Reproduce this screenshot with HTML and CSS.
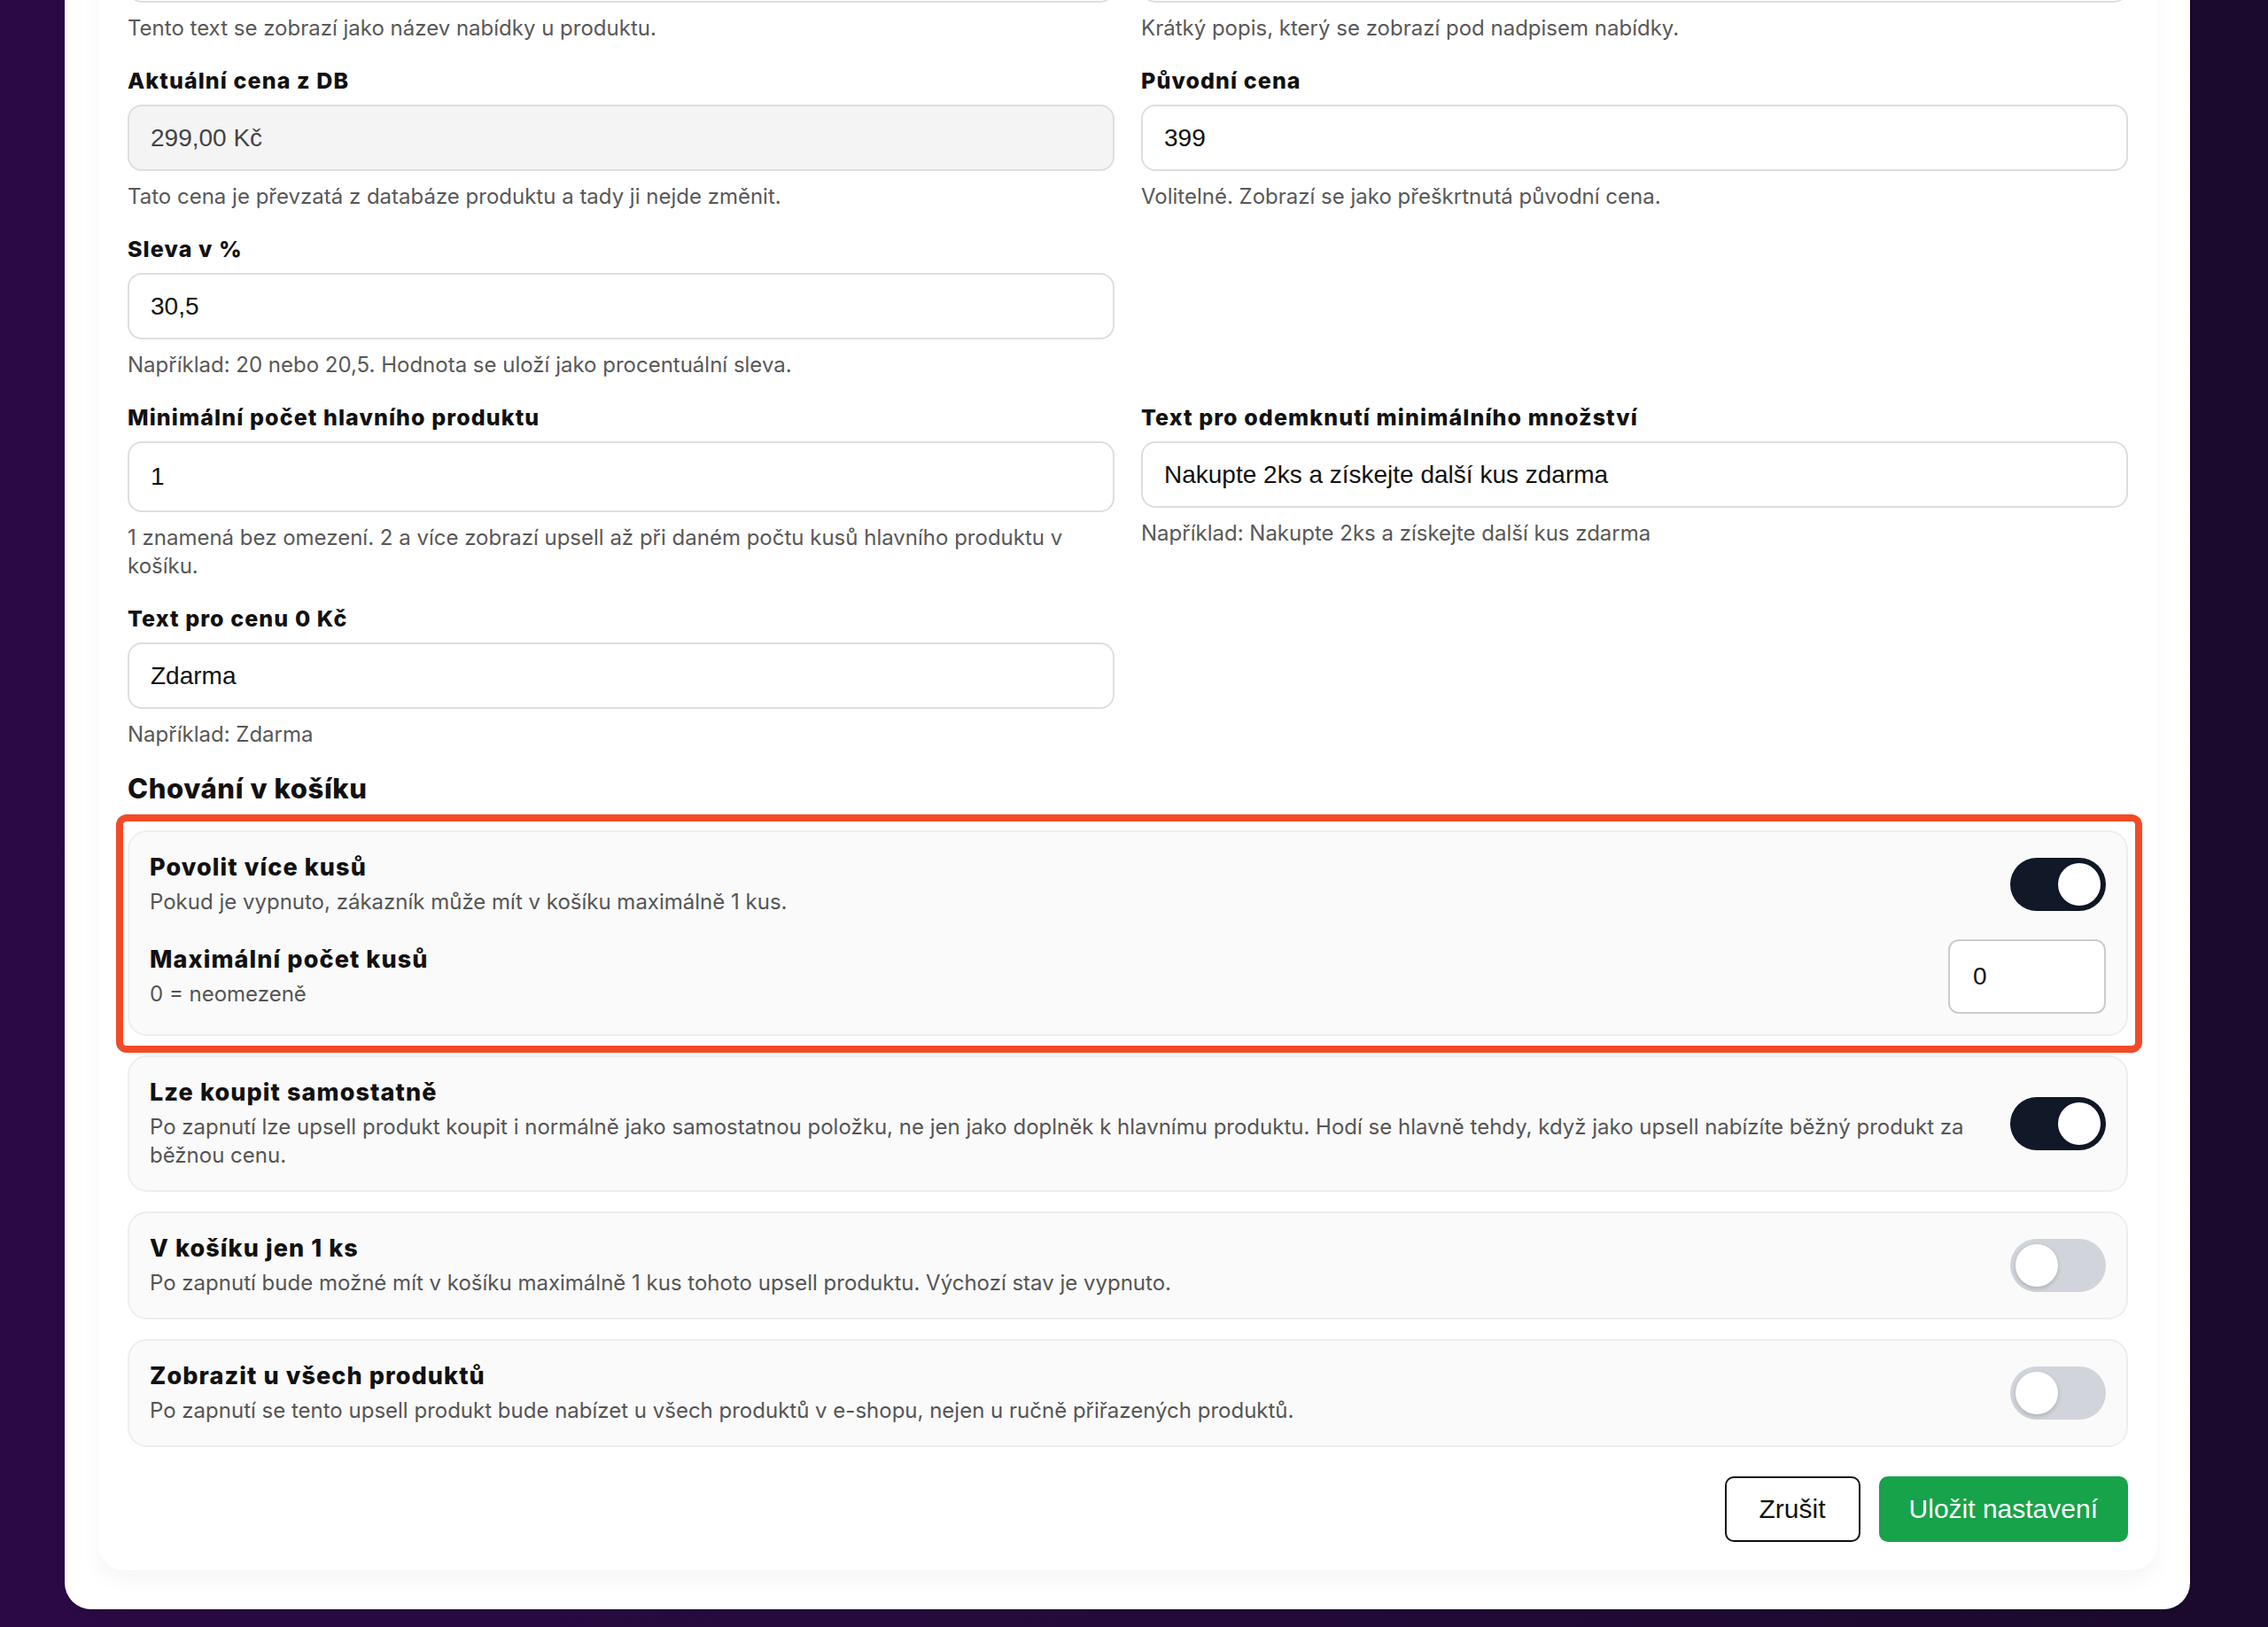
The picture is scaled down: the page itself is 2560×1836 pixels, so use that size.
FILE: index.html
```html
<!DOCTYPE html>
<html lang="cs">
<head>
    <meta charset="UTF-8">
    <meta name="viewport" content="width=device-width, initial-scale=1.0">
    <title>Upsell nabídka</title>
    <link rel="stylesheet" href="styles.css">
</head>
<body>
    <div class="page">
        <div class="panel">
            <form class="card">
                <!-- Základní údaje nabídky -->
                <div class="form-grid">
                    <div class="field">
                        <label class="field-label">Nadpis nabídky</label>
                        <input class="field-input" type="text" value="Doplňte si k objednávce">
                        <p class="field-hint">Tento text se zobrazí jako název nabídky u produktu.</p>
                    </div>
                    <div class="field">
                        <label class="field-label">Popis nabídky</label>
                        <input class="field-input" type="text" value="Výhodná nabídka jen pro vás">
                        <p class="field-hint">Krátký popis, který se zobrazí pod nadpisem nabídky.</p>
                    </div>

                    <div class="field">
                        <label class="field-label">Aktuální cena z DB</label>
                        <input class="field-input field-input--disabled" type="text" value="299,00 Kč" disabled>
                        <p class="field-hint">Tato cena je převzatá z databáze produktu a tady ji nejde změnit.</p>
                    </div>
                    <div class="field">
                        <label class="field-label">Původní cena</label>
                        <input class="field-input" type="text" value="399">
                        <p class="field-hint">Volitelné. Zobrazí se jako přeškrtnutá původní cena.</p>
                    </div>

                    <div class="field">
                        <label class="field-label">Sleva v %</label>
                        <input class="field-input" type="text" value="30,5">
                        <p class="field-hint">Například: 20 nebo 20,5. Hodnota se uloží jako procentuální sleva.</p>
                    </div>
                    <div></div>

                    <div class="field">
                        <label class="field-label">Minimální počet hlavního produktu</label>
                        <input class="field-input field-input--tall" type="text" value="1">
                        <p class="field-hint">1 znamená bez omezení. 2 a více zobrazí upsell až při daném počtu kusů hlavního produktu v košíku.</p>
                    </div>
                    <div class="field">
                        <label class="field-label">Text pro odemknutí minimálního množství</label>
                        <input class="field-input" type="text" value="Nakupte 2ks a získejte další kus zdarma">
                        <p class="field-hint">Například: Nakupte 2ks a získejte další kus zdarma</p>
                    </div>

                    <div class="field">
                        <label class="field-label">Text pro cenu 0 Kč</label>
                        <input class="field-input" type="text" value="Zdarma">
                        <p class="field-hint">Například: Zdarma</p>
                    </div>
                    <div></div>
                </div>

                <!-- Chování v košíku -->
                <h3 class="section-title">Chování v košíku</h3>

                <div class="option-list">
                    <div class="option option-highlight">
                        <div class="option-row">
                            <div class="option-text">
                                <div class="option-title">Povolit více kusů</div>
                                <div class="option-desc">Pokud je vypnuto, zákazník může mít v košíku maximálně 1 kus.</div>
                            </div>
                            <span class="switch is-on"><span class="knob"></span></span>
                        </div>
                        <div class="option-row option-row--sub">
                            <div class="option-text">
                                <div class="option-title">Maximální počet kusů</div>
                                <div class="option-desc">0 = neomezeně</div>
                            </div>
                            <input class="qty-input" type="text" value="0">
                        </div>
                    </div>

                    <div class="option">
                        <div class="option-row">
                            <div class="option-text">
                                <div class="option-title">Lze koupit samostatně</div>
                                <div class="option-desc">Po zapnutí lze upsell produkt koupit i normálně jako samostatnou položku, ne jen jako doplněk k hlavnímu produktu. Hodí se hlavně tehdy, když jako upsell nabízíte běžný produkt za běžnou cenu.</div>
                            </div>
                            <span class="switch is-on"><span class="knob"></span></span>
                        </div>
                    </div>

                    <div class="option">
                        <div class="option-row">
                            <div class="option-text">
                                <div class="option-title">V košíku jen 1 ks</div>
                                <div class="option-desc">Po zapnutí bude možné mít v košíku maximálně 1 kus tohoto upsell produktu. Výchozí stav je vypnuto.</div>
                            </div>
                            <span class="switch"><span class="knob"></span></span>
                        </div>
                    </div>

                    <div class="option">
                        <div class="option-row">
                            <div class="option-text">
                                <div class="option-title">Zobrazit u všech produktů</div>
                                <div class="option-desc">Po zapnutí se tento upsell produkt bude nabízet u všech produktů v e-shopu, nejen u ručně přiřazených produktů.</div>
                            </div>
                            <span class="switch"><span class="knob"></span></span>
                        </div>
                    </div>
                </div>

                <div class="actions">
                    <button type="button" class="btn btn-cancel">Zrušit</button>
                    <button type="submit" class="btn btn-save">Uložit nastavení</button>
                </div>
            </form>
        </div>
    </div>
</body>
</html>
```

FILE: styles.css
```css
/* General Reset */
* {
    margin: 0;
    padding: 0;
    box-sizing: border-box;
}

body {
    background: linear-gradient(90deg, #2b0944 0%, #240a3b 50%, #1b0a2c 100%);
    font-family: 'Inter', 'Noto Sans', sans-serif;
    color: #111111;
    min-height: 100vh;
}

/* Page wrapper - the page is scrolled down, the top is cut off */
.page {
    display: flow-root;
    padding: 0 88px 22px 73px;
}

.panel {
    margin-top: -190px;
    padding: 41px 37px 44px 38px;
    background: #FFFFFF;
    border-radius: 0 0 30px 30px;
    box-shadow: 0 0 0 1px rgba(0, 0, 0, 0.05), 0 2px 3px rgba(0, 0, 0, 0.12);
}

.card {
    background: #FFFFFF;
    border-radius: 0 0 28px 28px;
    padding: 33px 33px 32px;
    box-shadow: 0 10px 24px rgba(0, 0, 0, 0.045);
}

/* Form grid */
.form-grid {
    display: grid;
    grid-template-columns: 1fr 1fr;
    column-gap: 30px;
    row-gap: 26px;
    align-items: start;
}

.field-label {
    display: block;
    font-size: 25px;
    font-weight: 800;
    letter-spacing: 1.1px;
    line-height: 34px;
    margin-bottom: 10px;
    color: #111111;
}

.field-input {
    display: block;
    width: 100%;
    height: 75px;
    padding: 0 24px;
    border: 2px solid #dedede;
    border-radius: 16px;
    background: #FFFFFF;
    font-family: 'Liberation Sans', Arial, sans-serif;
    font-size: 28px;
    color: #111111;
    outline: none;
}

.field-input--tall {
    height: 80px;
}

.field-input--disabled {
    background: #f4f4f4;
    color: #444444;
}

.field-hint {
    margin-top: 13px;
    font-size: 24px;
    line-height: 32px;
    color: #585858;
}

/* Cart behaviour section */
.section-title {
    margin-top: 25px;
    margin-bottom: 27px;
    font-size: 31px;
    font-weight: 800;
    letter-spacing: 0.6px;
    line-height: 40px;
    color: #111111;
}

.option-list {
    display: flex;
    flex-direction: column;
    gap: 22px;
}

.option {
    background: #fafafa;
    border: 2px solid #eeeeee;
    border-radius: 22px;
    padding: 23px;
}

/* red highlight drawn around the first option */
.option-highlight {
    position: relative;
}

.option-highlight::after {
    content: "";
    position: absolute;
    top: -20px;
    right: -18px;
    bottom: -21px;
    left: -15px;
    border: 8px solid #f24a26;
    border-radius: 12px;
    pointer-events: none;
}

.option-row {
    display: flex;
    align-items: center;
    justify-content: space-between;
    gap: 48px;
}

.option-row--sub {
    margin-top: 26px;
}

.option-title {
    font-size: 27px;
    font-weight: 800;
    letter-spacing: 1.1px;
    line-height: 34px;
    color: #111111;
}

.option-desc {
    margin-top: 6px;
    font-size: 24px;
    line-height: 32px;
    color: #555555;
}

/* Toggle switch */
.switch {
    flex-shrink: 0;
    display: flex;
    align-items: center;
    width: 108px;
    height: 60px;
    padding: 6px;
    border-radius: 30px;
    background: #d1d5db;
}

.switch.is-on {
    justify-content: flex-end;
    background: #111827;
}

.knob {
    width: 48px;
    height: 48px;
    border-radius: 50%;
    background: #FFFFFF;
    box-shadow: 0 2px 5px rgba(0, 0, 0, 0.18);
}

.qty-input {
    flex-shrink: 0;
    width: 178px;
    height: 84px;
    padding: 0 26px;
    border: 2px solid #cccccc;
    border-radius: 12px;
    background: #FFFFFF;
    font-family: 'Liberation Sans', Arial, sans-serif;
    font-size: 28px;
    color: #111111;
    outline: none;
}

/* Buttons */
.actions {
    display: flex;
    justify-content: flex-end;
    gap: 21px;
    margin-top: 33px;
}

.btn {
    height: 74px;
    padding: 0 33px;
    border-radius: 10px;
    font-family: 'Liberation Sans', Arial, sans-serif;
    font-size: 30px;
    cursor: pointer;
}

.btn-cancel {
    background: #FFFFFF;
    color: #111111;
    border: 2px solid #111111;
    padding: 0 37px;
}

.btn-save {
    background: #16a34a;
    color: #FFFFFF;
    border: 2px solid #16a34a;
    padding: 0 32px;
}
```
